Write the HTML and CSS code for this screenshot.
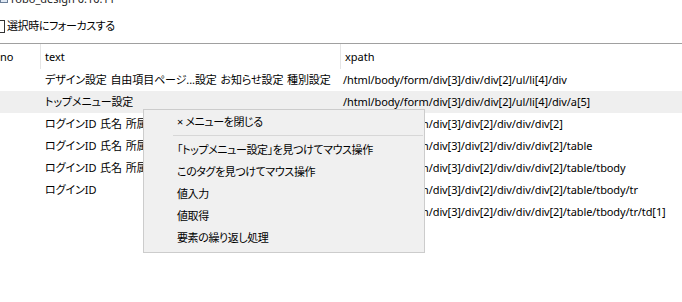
FILE: index.html
```html
<!DOCTYPE html>
<html lang="ja">
<head>
  <meta charset="UTF-8">
  <title>robo_design 0.10.11</title>
  <link rel="stylesheet" href="styles.css">
</head>
<body>

  <div class="titlebar">
    <svg class="app-icon" width="8" height="8" viewBox="0 0 8 8">
      <rect x="0.5" y="0.5" width="7" height="7" fill="#dfe8f3" stroke="#6b7f99"/>
      <rect x="1" y="1" width="6" height="2" fill="#4a78b5"/>
    </svg>
    <span>robo_design 0.10.11</span>
  </div>

  <label class="option jp">
    <span class="checkbox"></span>
    <span>選択時にフォーカスする</span>
  </label>

  <!-- element list -->
  <div class="grid">
    <div class="row head">
      <div class="cell no">no</div>
      <div class="cell text">text</div>
      <div class="cell xpath">xpath</div>
    </div>
    <div class="row">
      <div class="cell no"></div>
      <div class="cell text">デザイン設定 自由項目ページ...設定 お知らせ設定 種別設定</div>
      <div class="cell xpath">/html/body/form/div[3]/div/div[2]/ul/li[4]/div</div>
    </div>
    <div class="row selected">
      <div class="cell no"></div>
      <div class="cell text">トップメニュー設定</div>
      <div class="cell xpath">/html/body/form/div[3]/div/div[2]/ul/li[4]/div/a[5]</div>
    </div>
    <div class="row">
      <div class="cell no"></div>
      <div class="cell text">ログインID 氏名 所属 役職 メールアドレス</div>
      <div class="cell xpath">/html/body/form/div[3]/div[2]/div/div/div[2]</div>
    </div>
    <div class="row">
      <div class="cell no"></div>
      <div class="cell text">ログインID 氏名 所属 役職 メールアドレス</div>
      <div class="cell xpath">/html/body/form/div[3]/div[2]/div/div/div[2]/table</div>
    </div>
    <div class="row">
      <div class="cell no"></div>
      <div class="cell text">ログインID 氏名 所属 役職 メールアドレス</div>
      <div class="cell xpath">/html/body/form/div[3]/div[2]/div/div/div[2]/table/tbody</div>
    </div>
    <div class="row">
      <div class="cell no"></div>
      <div class="cell text">ログインID</div>
      <div class="cell xpath">/html/body/form/div[3]/div[2]/div/div/div[2]/table/tbody/tr</div>
    </div>
    <div class="row">
      <div class="cell no"></div>
      <div class="cell text"></div>
      <div class="cell xpath">/html/body/form/div[3]/div[2]/div/div/div[2]/table/tbody/tr/td[1]</div>
    </div>
  </div>

  <!-- context menu -->
  <div class="menu jp">
    <div class="menu-item">× メニューを閉じる</div>
    <div class="menu-sep"></div>
    <div class="menu-item">「トップメニュー設定」を見つけてマウス操作</div>
    <div class="menu-item">このタグを見つけてマウス操作</div>
    <div class="menu-item">値入力</div>
    <div class="menu-item">値取得</div>
    <div class="menu-item">要素の繰り返し処理</div>
  </div>

</body>
</html>
```

FILE: styles.css
```css
* {
  box-sizing: border-box;
}

body {
  margin: 0;
  width: 682px;
  height: 302px;
  overflow: hidden;
  position: relative;
  background: #fff;
  color: #000;
  font-family: "Noto Sans", "Noto Sans CJK JP", sans-serif;
  font-feature-settings: "palt";
  font-size: 11px;
  line-height: 16px;
}

/* japanese labels run narrower, like Meiryo UI */
.jp {
  letter-spacing: -0.4px;
}

.titlebar {
  display: flex;
  align-items: center;
  gap: 3px;
  height: 16px;
  margin-top: -9px;
  color: #222;
}

.app-icon {
  flex: none;
}

.option {
  display: flex;
  align-items: center;
  gap: 2px;
  height: 36px;
  padding: 11px 0 9px;
}

.checkbox {
  flex: none;
  width: 13px;
  height: 13px;
  margin-left: -8px;
  border: 1px solid #333;
  background: #fff;
}

.grid {
  border-top: 1px solid #a0a0a0;
}

.row {
  display: grid;
  grid-template-columns: 40px 300px 1fr;
  height: 22px;
  align-items: center;
}

.row.head {
  height: 25px;
  align-items: stretch;
}

.row.head .cell {
  display: flex;
  align-items: center;
  letter-spacing: 0;
}

.row.head .text,
.row.head .xpath {
  border-left: 1px solid #e5e5e5;
  padding-left: 4px;
}

.row.selected {
  background: #efefef;
}

.cell {
  white-space: nowrap;
  overflow: hidden;
}

.cell.text {
  padding-left: 5px;
  letter-spacing: -0.1px;
  word-spacing: 1px;
}

.cell.xpath {
  padding-left: 3px;
  letter-spacing: -0.1px;
  overflow: visible;
}

.menu {
  position: absolute;
  left: 143px;
  top: 109px;
  width: 282px;
  padding: 1px 0 3px;
  background: #f0f0f0;
  border: 1px solid #cccccc;
}

.menu-item {
  height: 22px;
  line-height: 22px;
  padding-left: 33px;
  white-space: nowrap;
}

.menu-sep {
  height: 1px;
  margin: 2px 1px 3px 29px;
  background: #d7d7d7;
}
```
